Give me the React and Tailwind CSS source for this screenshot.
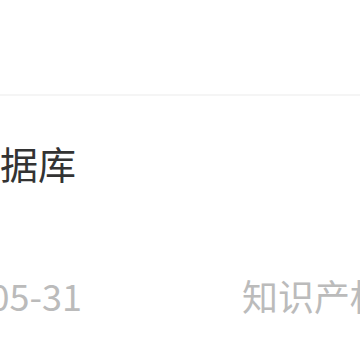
export default function App() {
  return (
    <div
      className="w-[360px] h-[360px] overflow-hidden bg-white"
      style={{ fontFamily: '"Noto Sans CJK SC", "Noto Sans", sans-serif' }}
    >
      <div className="h-[94px] bg-white" />
      <div className="h-[2px] bg-[#f5f5f5]" />
      <div className="pt-[39px]">
        <div className="text-[38px] leading-[56px] text-[#333333] whitespace-nowrap">
          据库
        </div>
        <div className="mt-[76px] flex items-center text-[36px] leading-[56px] text-[#bbbbbb] whitespace-nowrap">
          <div className="w-[82px] overflow-hidden flex justify-end shrink-0">
            <span>2023-05-31</span>
          </div>
          <span className="ml-[160px]">知识产权</span>
        </div>
      </div>
    </div>
  );
}
